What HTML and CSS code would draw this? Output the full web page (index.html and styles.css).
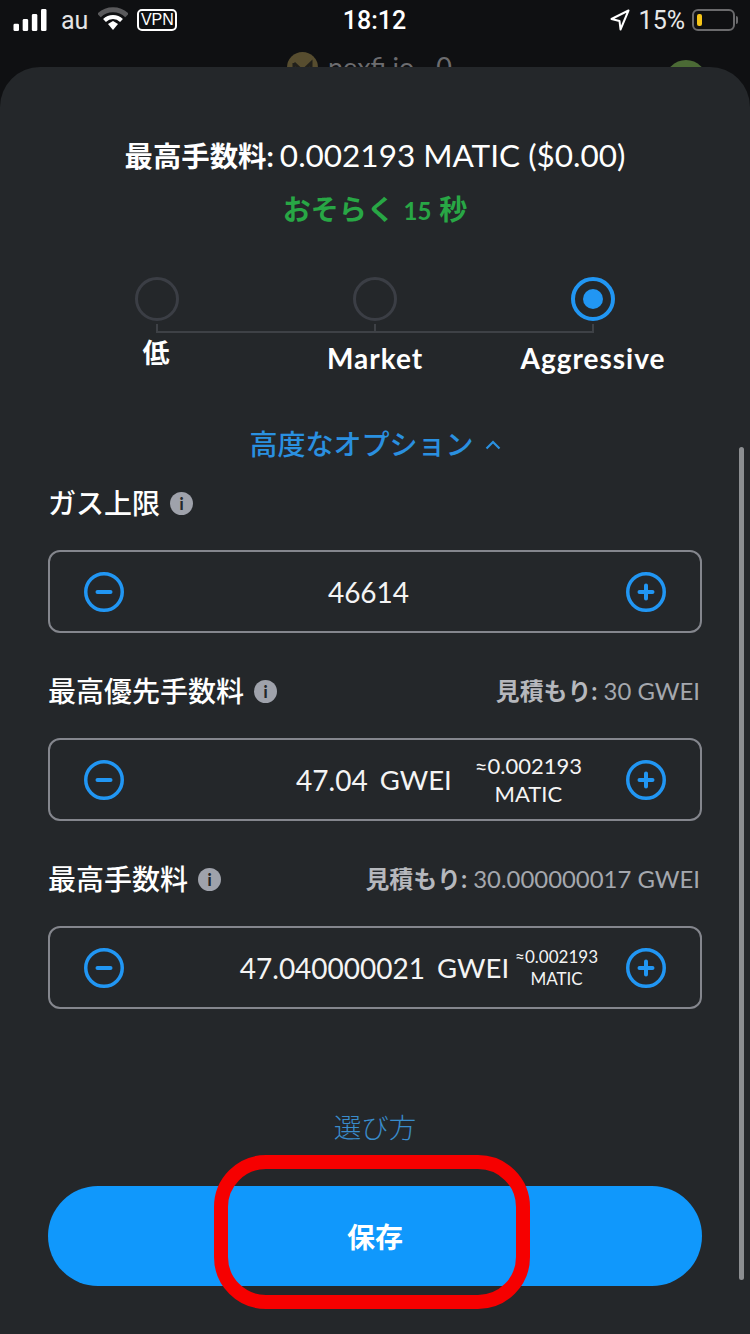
FILE: index.html
```html
<!DOCTYPE html>
<html lang="ja">
<head>
<meta charset="utf-8">
<title>Gas settings</title>
<link rel="stylesheet" href="styles.css">
</head>
<body>
<div class="screen">
  <header class="status">
    <div class="status-left">
      <svg class="signal" width="34" height="22" viewBox="0 0 36 24"><rect x="0" y="16" width="6" height="8" rx="1.5"/><rect x="10" y="11" width="6" height="13" rx="1.5"/><rect x="20" y="5.500" width="6" height="18.500" rx="1.500"/><rect x="30" y="0" width="6" height="24" rx="1.500"/></svg>
      <span class="carrier">au</span>
      <svg class="wifi" width="30" height="24" viewBox="0 0 30 24"><path d="M1 8.500 A20 20 0 0 1 29 8.500" fill="none" stroke="#5a5a5c" stroke-width="5"/><path d="M6.500 13.500 A12 12 0 0 1 23.500 13.500" fill="none" stroke="#fff" stroke-width="4"/><path d="M10 17 L15 14 L20 17 L15 23 Z" fill="#fff"/></svg>
      <span class="vpn">VPN</span>
    </div>
    <div class="clock">18:12</div>
    <div class="status-right">
      <svg width="20" height="22" viewBox="0 0 20 22"><path d="M18.500 1.500 L1.500 10 L9.500 12 L10.500 20.500 Z" fill="none" stroke="#fff" stroke-width="2" stroke-linejoin="round"/></svg>
      <span class="pct">15%</span>
      <span class="battery"><span class="battery-level"></span></span>
      <span class="battery-cap"></span>
    </div>
  </header>
  <div class="behind">
    <svg class="site-logo" width="31" height="31" viewBox="0 0 31 31"><circle cx="15.500" cy="15.500" r="15.500" fill="#5f5433"/><path d="M7 11 L15.500 19 L24 11 V22 M7 11 V22" fill="none" stroke="#23221d" stroke-width="3"/></svg><span class="site-name">nexfi.io</span><span class="site-q">0</span>
  </div>
  <span class="avatar"></span>

  <main class="sheet">
    <h1 class="fee"><b>最高手数料:</b> 0.002193 MATIC ($0.00)</h1>
    <p class="eta">おそらく <span class="eta-num">15</span> 秒</p>

    <div class="steps">
      <div class="step"><span class="radio"></span><span class="tick"></span><span class="step-label step-cjk">低</span></div>
      <div class="step"><span class="radio"></span><span class="tick"></span><span class="step-label">Market</span></div>
      <div class="step"><span class="radio radio-on"><span class="radio-dot"></span></span><span class="tick"></span><span class="step-label">Aggressive</span></div>
      <span class="step-line"></span>
    </div>

    <div class="advanced">高度なオプション
      <svg width="16" height="10" viewBox="0 0 16 10"><path d="M1.500 8.500 L8 2 L14.500 8.500" fill="none" stroke="#2a90e0" stroke-width="2.200"/></svg>
    </div>

    <section class="field field-first">
      <div class="field-head">
        <div class="field-title">ガス上限 <span class="info">i</span></div>
      </div>
      <div class="box">
        <svg class="pm" width="40" height="40" viewBox="0 0 40 40"><circle cx="20" cy="20" r="18.250"/><path d="M13.500 20 H26.500"/></svg>
        <div class="value value-center">46614</div>
        <svg class="pm" width="40" height="40" viewBox="0 0 40 40"><circle cx="20" cy="20" r="18.250"/><path d="M13.500 20 H26.500 M20 13.500 V26.500"/></svg>
      </div>
    </section>

    <section class="field">
      <div class="field-head">
        <div class="field-title">最高優先手数料 <span class="info">i</span></div>
        <div class="estimate"><b>見積もり:</b> 30 GWEI</div>
      </div>
      <div class="box">
        <svg class="pm" width="40" height="40" viewBox="0 0 40 40"><circle cx="20" cy="20" r="18.250"/><path d="M13.500 20 H26.500"/></svg>
        <div class="value value-gwei">
          <span class="num">47.04</span><span class="unit">GWEI</span>
          <span class="approx approx-lg">≈0.002193<br>MATIC</span>
        </div>
        <svg class="pm" width="40" height="40" viewBox="0 0 40 40"><circle cx="20" cy="20" r="18.250"/><path d="M13.500 20 H26.500 M20 13.500 V26.500"/></svg>
      </div>
    </section>

    <section class="field">
      <div class="field-head">
        <div class="field-title">最高手数料 <span class="info">i</span></div>
        <div class="estimate"><b>見積もり:</b> 30.000000017 GWEI</div>
      </div>
      <div class="box">
        <svg class="pm" width="40" height="40" viewBox="0 0 40 40"><circle cx="20" cy="20" r="18.250"/><path d="M13.500 20 H26.500"/></svg>
        <div class="value value-gwei value-tight">
          <span class="num">47.040000021</span><span class="unit">GWEI</span>
          <span class="approx approx-sm">≈0.002193<br>MATIC</span>
        </div>
        <svg class="pm" width="40" height="40" viewBox="0 0 40 40"><circle cx="20" cy="20" r="18.250"/><path d="M13.500 20 H26.500 M20 13.500 V26.500"/></svg>
      </div>
    </section>

    <a class="how">選び方</a>
    <button class="save">保存</button>
  </main>

  <span class="scrollbar"></span>
  <span class="ring"></span>
</div>
</body>
</html>
```
FILE: styles.css
```css
* { box-sizing: border-box; }
html, body { margin: 0; padding: 0; background: #0f1012; }
body { font-family: Lato, "Noto Sans CJK JP", sans-serif; color: #fff; }
.screen { position: relative; width: 750px; height: 1334px; overflow: hidden; background: #0f1012; }

.status { height: 67px; padding: 0 12px 0 13px; display: grid; grid-template-columns: 1fr auto 1fr; align-items: start; }
.status-left { display: flex; align-items: center; gap: 10px; height: 40px; }
.signal { fill: #fff; }
.carrier { font: 400 25px/40px Roboto, sans-serif; color: #e4e4e4; margin-left: 4px; margin-top: 2px; }
.wifi { margin-top: -2px; }
.vpn { font: 400 16px/22px "Liberation Sans", sans-serif; width: 40px; height: 22px; border: 2px solid #fff; border-radius: 5px; display: flex; align-items: center; justify-content: center; margin-left: -1px; }
.clock { font: 500 25px/42px Roboto, sans-serif; margin-left: -2px; }
.status-right { display: flex; align-items: center; justify-content: flex-end; height: 40px; gap: 0; }
.status-right svg { margin-right: 9px; }
.pct { font: 400 25px/40px Roboto, sans-serif; color: #e8e8e8; margin-right: 7px; margin-top: 2px; }
.battery { width: 43px; height: 22px; border: 2px solid #6a6a6c; border-radius: 6px; padding: 3px; display: block; }
.battery-level { display: block; width: 5px; height: 100%; background: #f5c518; border-radius: 2px; }
.battery-cap { width: 2px; height: 8px; background: #6a6a6c; margin-left: 1px; border-radius: 0 2px 2px 0; }

.behind { position: absolute; top: 52px; left: 287px; display: flex; align-items: center; height: 30px; color: #77777a; font: 400 27px/30px Lato, sans-serif; opacity: .9; }
.site-logo { margin-right: 10px; }
.site-q { margin-left: 22px; }
.avatar { position: absolute; top: 60px; left: 665px; width: 42px; height: 42px; border-radius: 50%; background: #4b6a35; }

.sheet { position: absolute; top: 67px; left: 0; width: 750px; height: 1267px; padding: 0 48px; background: #24272a; border-radius: 40px 40px 0 0; display: flex; flex-direction: column; }

.fee { margin: 67px -40px 0; font-size: 31.500px; line-height: 42px; font-weight: 400; text-align: center; color: #fff; white-space: nowrap; }
.fee b { font-weight: 700; font-size: 28.400px; margin-right: -2px; }
.eta { margin: 13px 0 0; font-size: 28px; line-height: 38px; font-weight: 700; color: #28a745; text-align: center; }
.eta-num { font-size: 24px; margin: 0 1px 0 2px; }

.steps { position: relative; margin-top: 47px; display: flex; justify-content: space-between; height: 107px; }
.step { position: relative; width: 0; flex: 0 0 0; margin: 0 109px; display: flex; flex-direction: column; align-items: center; }
.radio { flex: none; width: 44px; height: 44px; border-radius: 50%; border: 3px solid #3b3e45; display: flex; align-items: center; justify-content: center; }
.radio-on { border: 4px solid #2196f3; }
.radio-dot { width: 20px; height: 20px; border-radius: 50%; background: #2196f3; }
.tick { flex: none; width: 2px; height: 9px; background: #3e4146; margin-top: 3px; }
.step-label { flex: none; margin-top: 6px; font-size: 28px; line-height: 38px; letter-spacing: 1px; font-weight: 700; white-space: nowrap; }
.step-cjk { margin-top: 1px; margin-left: -2px; font-size: 27px; letter-spacing: 0; }
.step-line { position: absolute; left: 109px; right: 109px; top: 54px; height: 2px; background: #3e4146; }

.advanced { margin-top: 40px; height: 40px; font-size: 28px; line-height: 40px; font-weight: 500; color: #2a90e0; text-align: center; }
.advanced svg { margin-left: 4px; vertical-align: 5px; }

.field { margin-top: 38px; }
.field-first { margin-top: 19px; }
.field-head { display: flex; justify-content: space-between; align-items: center; height: 40px; margin-bottom: 27px; }
.field-title { font-size: 28px; line-height: 40px; font-weight: 500; display: flex; align-items: center; gap: 10px; }
.info { width: 23px; height: 23px; border-radius: 50%; background: #9fa2ab; color: #24272a; font: 900 16px/23px Lato, sans-serif; text-align: center; }
.estimate { font-size: 23.900px; line-height: 40px; color: #a5a8ae; margin-right: 2px; }
.estimate b { font-weight: 700; color: #b6b8bd; }

.box { height: 83px; border: 2px solid #84868d; border-radius: 12px; padding: 0 34px 0 34px; display: flex; align-items: center; }
.pm { flex: none; fill: none; stroke: #2196f3; stroke-width: 3.500; }
.pm path { stroke-width: 4; stroke-linecap: round; }
.value { flex: 1; font-size: 28px; line-height: 36px; color: #f4f4f4; }
.value-center { text-align: center; padding-right: 13px; }
.value-gwei { display: flex; align-items: center; justify-content: flex-end; padding-right: 44px; }
.value-tight { padding-right: 28px; }
.unit { margin-left: 12px; font-size: 27.500px; }
.approx { display: block; text-align: center; }
.approx-lg { font-size: 22px; line-height: 28px; margin-left: 23px; }
.approx-sm { font-size: 17px; line-height: 22px; margin-left: 6px; }

.how { margin-top: 99px; height: 40px; font-size: 27.500px; line-height: 40px; color: #3a8ccb; text-align: center; font-weight: 300; }
.save { margin-top: 38px; flex: none; height: 100px; width: 100%; border: 0; border-radius: 50px; background: #1098fc; color: #fff; font: 700 28px/100px Lato, "Noto Sans CJK JP", sans-serif; }

.scrollbar { position: absolute; left: 739px; top: 447px; width: 5px; height: 833px; border-radius: 3px; background: #8c8e91; }
.ring { position: absolute; left: 214px; top: 1155px; width: 316px; height: 154px; border: 14px solid #f60000; border-radius: 52px; }
```
